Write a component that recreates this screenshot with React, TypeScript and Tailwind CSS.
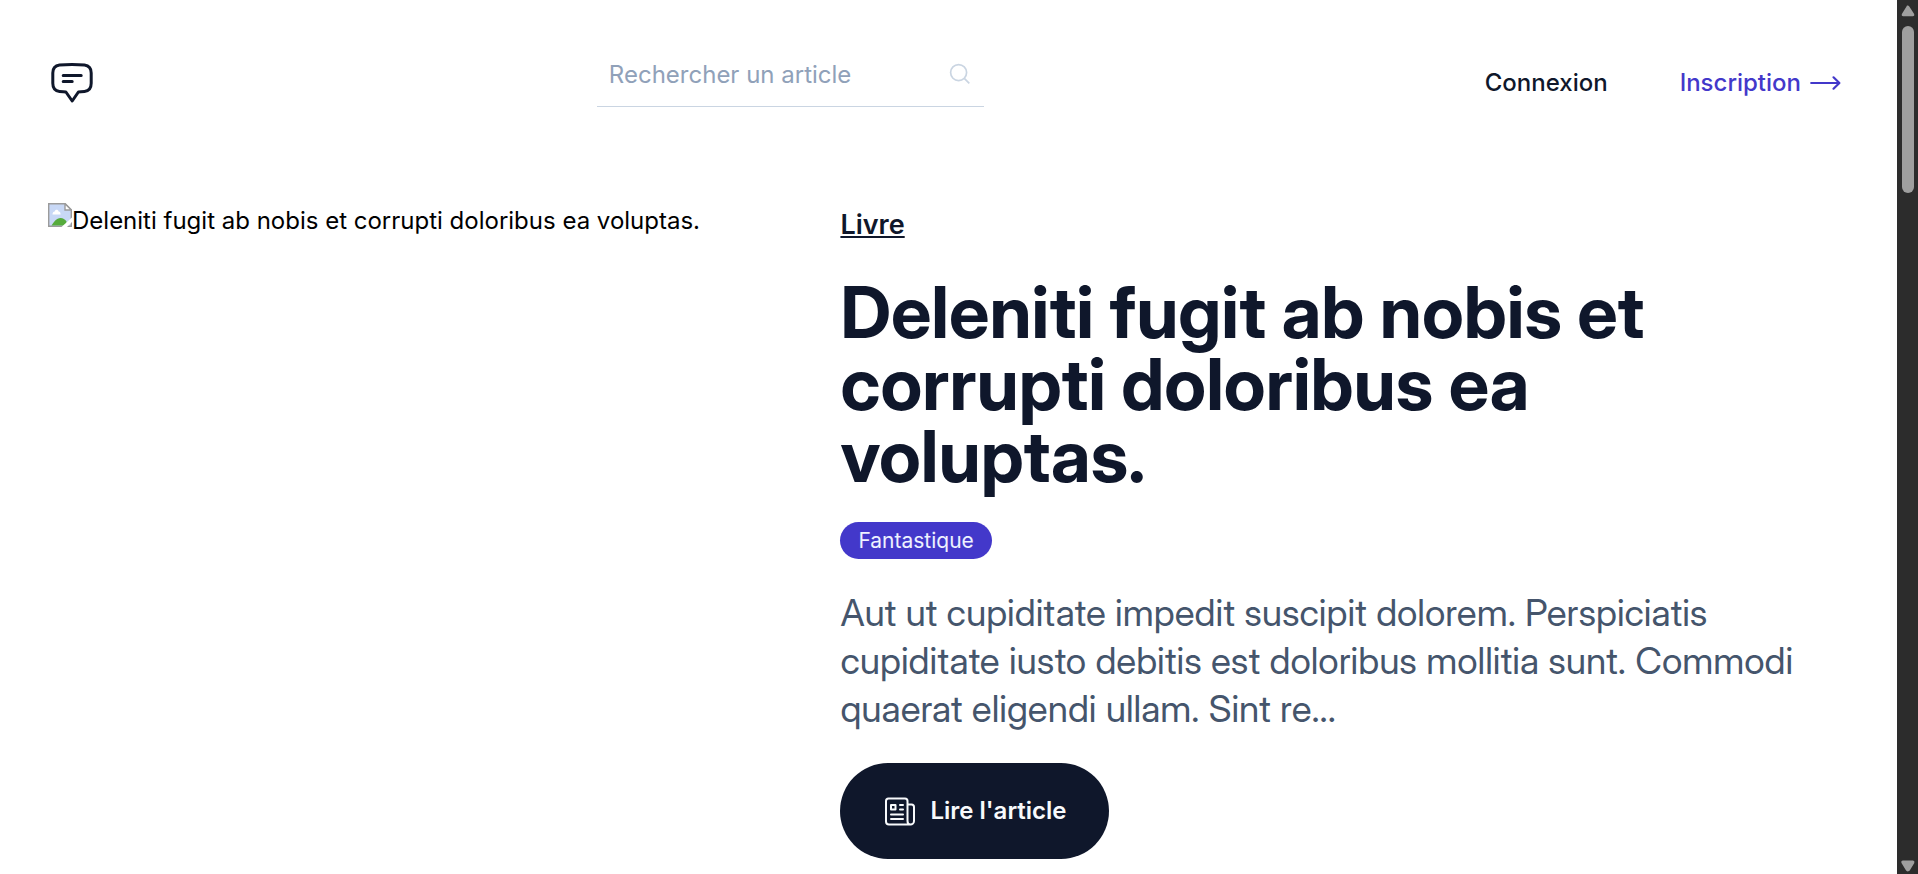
import React from "react";

function LogoIcon() {
  return (
    <svg viewBox="0 0 48 48" className="size-12" fill="none" stroke="currentColor" strokeWidth="3" strokeLinecap="round" strokeLinejoin="round" aria-hidden="true">
      <path d="M4.800 14c0-5 2.200-7.300 6.700-7.900C15.500 5.600 19.700 5.400 24 5.400s8.500.2 12.500.7c4.500.6 6.700 2.900 6.700 7.900v10.300c0 5-2.200 7.700-6.700 8.200-2 .2-4 .4-6.100.5L24.200 42l-6.300-9c-2.200-.1-4.300-.3-6.400-.5-4.500-.5-6.700-3.200-6.700-8.200z" />
      <path d="M15.200 16.400h18M15.200 22.500h9" />
    </svg>
  );
}

function SearchIcon() {
  return (
    <svg viewBox="0 0 24 24" className="size-6" fill="none" stroke="currentColor" strokeWidth="1.700" aria-hidden="true">
      <circle cx="10.600" cy="10.600" r="8" />
      <path d="M16.300 16.300l5 5" />
    </svg>
  );
}

function ArrowIcon() {
  return (
    <svg viewBox="0 0 48 48" className="size-12" fill="none" stroke="currentColor" strokeWidth="2.200" strokeLinecap="round" strokeLinejoin="round" aria-hidden="true">
      <path d="M10.200 24h28M32.500 18.300l5.900 5.700-5.900 5.700" />
    </svg>
  );
}

function NewspaperIcon() {
  return (
    <svg viewBox="0 0 36 36" className="size-9" fill="none" stroke="currentColor" strokeWidth="2" strokeLinecap="round" strokeLinejoin="round" aria-hidden="true">
      <path d="M29 31.500H7a3 3 0 0 1-3-3V8a2.500 2.500 0 0 1 2.500-2.500H23A2.500 2.500 0 0 1 25.500 8v20c0 2 1.300 3.500 3 3.500s3.500-1.500 3.500-3.500V14a2.500 2.500 0 0 0-2.500-2.500h-4" />
      <path d="M9 12h4.500v4.500H9zM18 12h3M18 16.500h3M9 21.500h12M9 26h12" />
    </svg>
  );
}

function BrokenImageIcon() {
  return (
    <svg viewBox="0 0 24 24" className="size-6 shrink-0" aria-hidden="true">
      <path d="M.7.7h16.500l6.100 6.100v16.500H.7z" fill="#c8d8f6" stroke="#9b9b9b" strokeWidth="1.400" />
      <path d="M4.500 11.500c0-2 1-3 2.200-3C7 6 10.300 6 10.600 8.500c1.400 0 2 1.300 2 3z" fill="#fff" />
      <path d="M3.500 22.600c2-3.500 5-7.600 9-7.600 2.500 0 4.500 1.500 6 3.500v4.100z" fill="#55ab3c" />
      <path d="M24 14.500V19L19 24h-5.500z" fill="#fff" />
      <path d="M17 .7V7h6.300z" fill="#fff" stroke="#9b9b9b" strokeWidth="1.400" />
    </svg>
  );
}

function Header() {
  return (
    <header className="flex min-h-[118px] items-center justify-between px-12 pt-12">
      <a href="#" aria-label="Accueil">
        <LogoIcon />
      </a>
      <form className="flex h-[59px] w-[387px] items-start justify-between self-start border-b border-slate-300 px-3 pt-1 text-slate-300" onSubmit={(e) => e.preventDefault()}>
        <input type="search" aria-label="Rechercher un article" placeholder="Rechercher un article" className="h-11 min-w-0 flex-1 bg-transparent text-2xl text-slate-900 outline-none placeholder:text-slate-400" />
        <button type="submit" aria-label="Rechercher" className="flex h-11 items-center">
          <SearchIcon />
        </button>
      </form>
      <nav className="flex items-center gap-[72px] text-2xl font-medium">
        <a href="#">Connexion</a>
        <a href="#" className="flex items-center text-[#4338ca]">
          Inscription
          <ArrowIcon />
        </a>
      </nav>
    </header>
  );
}

function FeaturedArticle() {
  return (
    <article className="grid grid-cols-7 gap-12 px-12 pt-[85px] pb-4">
      <div className="col-span-3 flex items-start text-2xl leading-9 text-black">
        <BrokenImageIcon />
        <span>Deleniti fugit ab nobis et corrupti doloribus ea voluptas.</span>
      </div>
      <div className="col-span-4 flex flex-col items-start gap-[30px]">
        <a href="#" className="text-[27px] leading-[43px] font-semibold underline">Livre</a>
        <h1 className="font-['Inter_Display','Inter',sans-serif] text-7xl leading-[72px] font-bold">
          Deleniti fugit ab nobis et corrupti doloribus ea voluptas.
        </h1>
        <a href="#" className="rounded-full bg-[#4338ca] px-[18px] py-1 text-[21px] leading-[29px] text-indigo-50">Fantastique</a>
        <p className="font-['Inter_Display','Inter',sans-serif] text-[37px] leading-[48px] text-slate-600">
          Aut ut cupiditate impedit suscipit dolorem. Perspiciatis cupiditate iusto debitis est doloribus mollitia sunt. Commodi quaerat eligendi ullam. Sint re...
        </p>
        <a href="#" className="flex h-24 items-center gap-3 rounded-full bg-slate-900 px-[42px] text-2xl font-semibold text-slate-50">
          <NewspaperIcon />
          Lire l'article
        </a>
      </div>
    </article>
  );
}

function ScrollRail() {
  return (
    <div className="sticky top-0 flex h-screen w-[21px] shrink-0 flex-col items-center bg-[#2c2c2c] text-[#9f9f9f]" aria-hidden="true">
      <svg viewBox="0 0 21 26" className="h-[26px] w-[21px]" fill="currentColor">
        <path d="M10 5.500Q11.300 5 12.300 6.500L17 13.800Q18 16 15.800 16.200H6.200Q4 16 5 13.800L9.500 6.500z" />
      </svg>
      <div className="h-[167px] w-3 rounded-full bg-[#9f9f9f]" />
      <svg viewBox="0 0 21 26" className="mt-auto h-[26px] w-[21px]" fill="currentColor">
        <path d="M11 23.300Q9.900 23.800 8.900 22.300L4.500 15Q3.700 12.800 6 12.600H16Q18 12.800 17.300 15L12.900 22.300Q12 23.500 11 23.300z" />
      </svg>
    </div>
  );
}

export default function App() {
  return (
    <div className="flex h-screen overflow-hidden bg-white font-['Inter',sans-serif] text-slate-900">
      <div className="min-w-0 flex-1">
        <Header />
        <main>
          <FeaturedArticle />
        </main>
      </div>
      <ScrollRail />
    </div>
  );
}
